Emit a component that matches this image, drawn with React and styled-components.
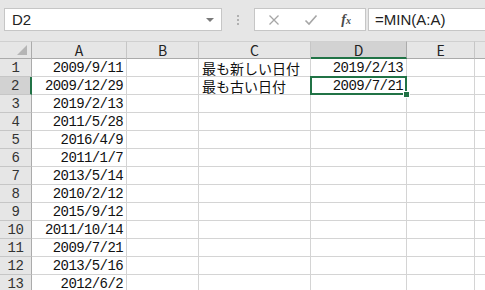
import styled, { createGlobalStyle } from 'styled-components'

const GlobalStyle = createGlobalStyle`
	html, body {
		margin: 0;
		padding: 0;
		background: #ffffff;
		overflow: hidden;
	}
	body {
		font-family: "Noto Sans CJK JP", "Liberation Sans", sans-serif;
	}
`

const columns = [
	{ name: 'A', width: 95 },
	{ name: 'B', width: 72 },
	{ name: 'C', width: 112 },
	{ name: 'D', width: 96 },
	{ name: 'E', width: 68 },
	{ name: '', width: 60 },
]

const dates = [
	'2009/9/11', '2009/12/29', '2019/2/13', '2011/5/28', '2016/4/9', '2011/1/7',
	'2013/5/14', '2010/2/12', '2015/9/12', '2011/10/14', '2009/7/21', '2013/5/16', '2012/6/2',
]

const cValues = { 1: '最も新しい日付', 2: '最も古い日付' }
const dValues = { 1: '2019/2/13', 2: '2009/7/21' }

const App = () => {
	return (
		<Page>
			<GlobalStyle />
			<FormulaBar>
				<NameBox>
					<span>D2</span>
					<DropArrow />
				</NameBox>
				<Grip>
					<i /><i /><i />
				</Grip>
				<ButtonBox>
					<svg width="12" height="12" viewBox="0 0 12 12">
						<path d="M1.5 1.5 L10.5 10.5 M10.5 1.5 L1.5 10.5" stroke="#a6a6a6" strokeWidth="1.3" fill="none" />
					</svg>
					<svg width="14" height="12" viewBox="0 0 14 12">
						<path d="M1.5 6.5 L5 10 L12.5 1.5" stroke="#a6a6a6" strokeWidth="1.6" fill="none" />
					</svg>
					<Fx>f<sub>x</sub></Fx>
				</ButtonBox>
				<FormulaInput>=MIN(A:A)</FormulaInput>
			</FormulaBar>

			<Sheet>
				<Corner><CornerTriangle /></Corner>
				{columns.map((col, idx) =>
					<ColHeader key={'h' + idx} isSelected={col.name === 'D'}>{col.name}</ColHeader>
				)}
				{dates.map((date, r) => {
					const row = r + 1
					return [
						<RowHeader key={'r' + row} isSelected={row === 2}>{row}</RowHeader>,
						<Cell key={'a' + row} align="right"><Num>{date}</Num></Cell>,
						<Cell key={'b' + row} />,
						<Cell key={'c' + row}>{cValues[row]}</Cell>,
						<Cell key={'d' + row} align="right" isActive={row === 2}>
							{dValues[row] && <Num>{dValues[row]}</Num>}
							{row === 2 && <FillHandle />}
						</Cell>,
						<Cell key={'e' + row} />,
						<Cell key={'f' + row} />,
					]
				})}
			</Sheet>
		</Page>
	)
}

const Page = styled.div`
	width: 485px;
	height: 290px;
	overflow: hidden;
	background: #ffffff;
`

const FormulaBar = styled.div`
	height: 41px;
	box-sizing: border-box;
	padding: 8px 0 10px 4px;
	background: #e6e6e6;
	display: flex;
	align-items: stretch;
`

const NameBox = styled.div`
	width: 218px;
	box-sizing: border-box;
	background: #ffffff;
	border: 1px solid #c6c6c6;
	display: flex;
	align-items: center;
	justify-content: space-between;
	padding: 0 7px 0 7px;
	font-family: "Liberation Sans", sans-serif;
	font-size: 15px;
	color: #222;
`

const DropArrow = styled.span`
	width: 0;
	height: 0;
	border-left: 4px solid transparent;
	border-right: 4px solid transparent;
	border-top: 4px solid #7a7a7a;
`

const Grip = styled.div`
	width: 32px;
	display: flex;
	flex-direction: column;
	align-items: center;
	justify-content: center;
	gap: 2px;

	i {
		width: 2px;
		height: 2px;
		background: #b0b0b0;
	}
`

const ButtonBox = styled.div`
	width: 112px;
	box-sizing: border-box;
	background: #ffffff;
	border: 1px solid #c6c6c6;
	display: flex;
	align-items: center;
	justify-content: space-between;
	padding: 0 14px 0 13px;
`

const Fx = styled.span`
	font-family: "Liberation Serif", serif;
	font-style: italic;
	font-weight: bold;
	font-size: 14px;
	color: #4a4a4a;

	sub {
		font-size: 10px;
		vertical-align: 0;
	}
`

const FormulaInput = styled.div`
	flex: 1;
	margin-left: 2px;
	background: #ffffff;
	border: 1px solid #c6c6c6;
	border-right: none;
	display: flex;
	align-items: center;
	padding-left: 6px;
	font-family: "Liberation Sans", sans-serif;
	font-size: 15px;
	color: #222;
`

const Sheet = styled.div`
	display: grid;
	grid-template-columns: 32px ${columns.map(c => c.width + 'px').join(' ')};
	grid-auto-rows: 18px;
	background: #ffffff;
`

const Corner = styled.div`
	position: relative;
	background: #e6e6e6;
	border-right: 1px solid #ababab;
	border-bottom: 1px solid #ababab;
	border-top: 1px solid #d0d0d0;
	box-sizing: border-box;
`

const CornerTriangle = styled.span`
	position: absolute;
	right: 4px;
	bottom: 3px;
	width: 0;
	height: 0;
	border-left: 10px solid transparent;
	border-bottom: 10px solid #b5b5b5;
`

const ColHeader = styled.div`
	box-sizing: border-box;
	background: ${props => props.isSelected ? '#d2d2d2' : '#e6e6e6'};
	border-top: 1px solid #d0d0d0;
	border-right: 1px solid ${props => props.isSelected ? '#ababab' : '#c6c6c6'};
	border-bottom: ${props => props.isSelected ? '2px solid #217346' : '1px solid #ababab'};
	display: flex;
	align-items: center;
	justify-content: center;
	font-family: "Noto Sans CJK JP", "Liberation Sans", sans-serif;
	font-size: 14px;
	color: #222;
	line-height: 1;
`

const RowHeader = styled.div`
	box-sizing: border-box;
	background: ${props => props.isSelected ? '#d2d2d2' : '#e6e6e6'};
	border-right: ${props => props.isSelected ? '2px solid #217346' : '1px solid #ababab'};
	border-bottom: 1px solid #c6c6c6;
	display: flex;
	align-items: center;
	justify-content: center;
	font-family: "Liberation Mono", monospace;
	font-size: 14px;
	letter-spacing: -0.4px;
	color: #333;
	line-height: 1;
`

const Cell = styled.div`
	position: relative;
	box-sizing: border-box;
	border-right: 1px solid #d4d4d4;
	border-bottom: 1px solid #d4d4d4;
	display: flex;
	align-items: center;
	justify-content: ${props => props.align === 'right' ? 'flex-end' : 'flex-start'};
	padding: 0 3px 0 3px;
	font-family: "Noto Sans CJK JP", sans-serif;
	font-size: 14px;
	color: #111;
	white-space: nowrap;
	line-height: 14px;
	overflow: visible;

	${props => props.isActive && `
		&::after {
			content: '';
			position: absolute;
			left: -1px;
			top: -1px;
			right: -1px;
			bottom: -1px;
			border: 2px solid #217346;
		}
	`}
`

const Num = styled.span`
	font-family: "Liberation Mono", monospace;
	font-size: 14px;
	letter-spacing: -0.6px;
`

const FillHandle = styled.span`
	position: absolute;
	right: -4px;
	bottom: -4px;
	width: 5px;
	height: 5px;
	background: #217346;
	border: 1px solid #ffffff;
	z-index: 2;
`

export default App
